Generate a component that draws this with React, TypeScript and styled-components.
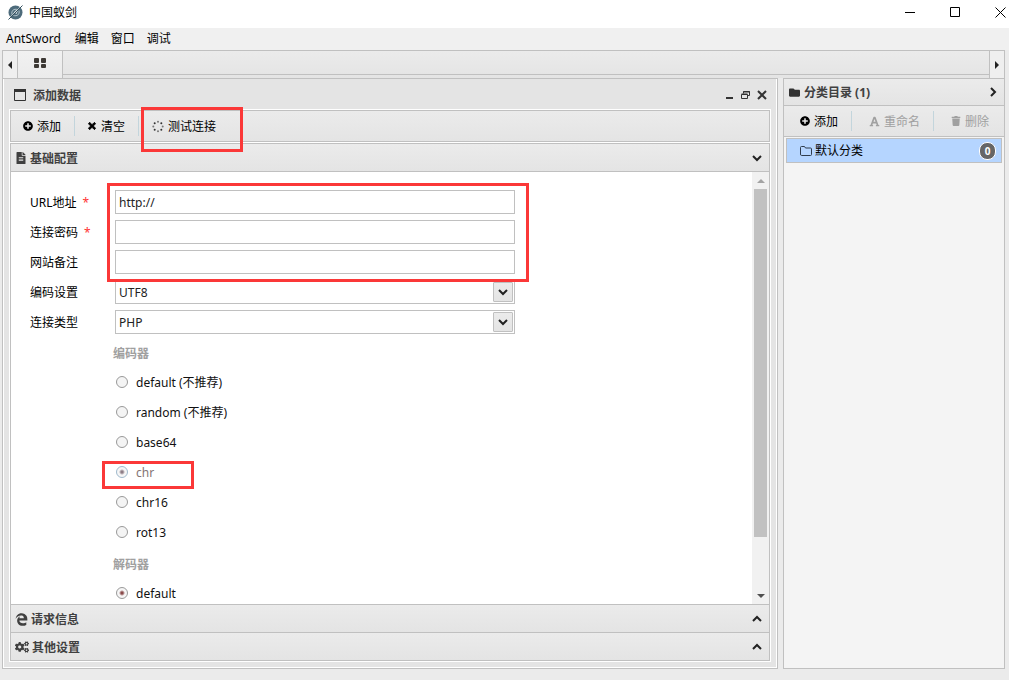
import React, { useState } from "react";
import styled, { createGlobalStyle, css } from "styled-components";
import {
  FaCogs,
  FaEdgeLegacy,
  FaFileAlt,
  FaFolder,
  FaFont,
  FaPlusCircle,
  FaTimes,
  FaTrash,
} from "react-icons/fa";

const line = "#c0c0c0";
const bar = "linear-gradient(#ebebeb, #e4e4e4)";

const GlobalStyle = createGlobalStyle`
  *, *::before, *::after { box-sizing: border-box; }
  body {
    margin: 0;
    background: #ebebeb;
    color: #000;
    font: 12px/17px "Noto Sans", "Noto Sans CJK SC", sans-serif;
  }
  button, input, select { font: inherit; color: inherit; }
  button { margin: 0; padding: 0; border: 0; background: none; }
  svg { display: block; flex: none; }
`;

const Window = styled.div`
  display: flex;
  flex-direction: column;
  height: 100vh;
`;

const TitleBar = styled.header`
  display: flex;
  align-items: center;
  flex: none;
  gap: 6px;
  height: 28px;
  padding: 0 3px 3px 8px;
  background: #fff;
`;

const AppTitle = styled.h1`
  flex: 1;
  margin: 0;
  font-size: 12px;
  font-weight: 400;
`;

const WindowControls = styled.div`
  display: flex;
  gap: 34px;
`;

const MenuBar = styled.nav`
  display: flex;
  align-items: center;
  flex: none;
  gap: 12px;
  height: 22px;
  padding: 0 6px 1px;
  background: #f0f0f0;
`;

const MenuItem = styled.button`
  flex: none;

  &:first-child { padding-right: 2px; }
`;

const Frame = styled.main`
  display: flex;
  flex-direction: column;
  flex: 1;
  min-height: 0;
  padding: 0 4px 11px 2px;
`;

const TabBar = styled.div`
  display: flex;
  flex: none;
  height: 28px;
  border: 1px solid ${line};
  border-bottom: 0;
  background: ${bar};
`;

const TabArrow = styled.button<{ $side: "left" | "right" }>`
  display: flex;
  align-items: center;
  justify-content: center;
  width: 15px;
  background: #efefef;
  ${(p) => (p.$side === "left" ? "border-right" : "border-left")}: 1px solid ${line};
`;

const ActiveTab = styled.button`
  display: flex;
  justify-content: center;
  width: 45px;
  padding-top: 7px;
  border-right: 1px solid ${line};
  background: linear-gradient(#f1f1f1, #ebebeb);
`;

const TabSpace = styled.div`
  flex: 1;
  height: 24px;
  border-bottom: 1px solid ${line};
`;

const Workspace = styled.div`
  display: flex;
  flex: 1;
  gap: 5px;
  min-height: 0;
`;

const Dialog = styled.section`
  display: flex;
  flex-direction: column;
  flex: 1;
  min-width: 0;
  padding: 0 6px 6px;
  border: 1px solid ${line};
  box-shadow: inset 1px 0 #fff, inset -1px -1px #fff;
  background: #e4e4e4;
`;

const DialogHeader = styled.header`
  display: flex;
  align-items: center;
  flex: none;
  gap: 7px;
  height: 30px;
  padding: 2px 4px 0 5px;
  color: #333;
`;

const Heading = styled.h2`
  flex: 1;
  margin: 0;
  font-size: 12px;
  font-weight: 700;
  color: #404040;
`;

const DialogControls = styled.div`
  display: flex;
  align-items: center;
  gap: 7px;
`;

const DialogBody = styled.div`
  display: flex;
  flex-direction: column;
  flex: 1;
  gap: 1px;
  min-height: 0;
  padding: 1px;
  background: #fff;
`;

const Toolbar = styled.div<{ $boxed?: boolean }>`
  display: flex;
  align-items: center;
  flex: none;
  background: ${bar};
  ${(p) =>
    p.$boxed
      ? css`
          height: 32px;
          border: 1px solid ${line};
        `
      : css`
          height: 31px;
          padding-left: 2px;
          border-bottom: 1px solid ${line};
        `}
`;

const ToolButton = styled.button<{ $wide?: boolean }>`
  position: relative;
  display: flex;
  align-items: center;
  gap: 4px;
  height: 20px;
  padding: 0 13px 0 ${(p) => (p.$wide ? 14 : 12)}px;
  white-space: nowrap;

  &:not(:first-child) {
    padding-left: ${(p) => (p.$wide ? 17 : 12)}px;
    border-left: 1px solid #c3d5dc;
  }

  &:disabled { color: #a0a0a0; }
`;

const Highlight = styled.span<{ $inset: string }>`
  position: absolute;
  inset: ${(p) => p.$inset};
  z-index: 2;
  border: 3px solid #fb3838;
  pointer-events: none;
`;

const Accordion = styled.div`
  display: flex;
  flex-direction: column;
  flex: 1;
  min-height: 0;
  border: 1px solid ${line};
`;

const AccordionHeader = styled.button<{ $open?: boolean }>`
  display: flex;
  align-items: center;
  flex: none;
  gap: 3px;
  height: 28px;
  padding: 1px 7px 0 4px;
  background: ${bar};
  color: #404040;
  font-weight: 700;
  text-align: left;
  border-${(p) => (p.$open ? "bottom" : "top")}: 1px solid ${line};
`;

const HeaderText = styled.span`
  flex: 1;
`;

const Pane = styled.div`
  display: flex;
  flex: 1;
  min-height: 0;
  background: #fff;
`;

const Form = styled.form`
  flex: 1;
  min-width: 0;
  overflow: hidden;
  padding: 15px 19px 0;
`;

const FieldGroup = styled.div`
  position: relative;
  width: 485px;
  max-width: 100%;
`;

const Row = styled.div`
  display: flex;
  align-items: center;
  height: 30px;
`;

const Label = styled.label`
  width: 85px;
  flex: none;
`;

const Required = styled.span`
  margin-left: 6px;
  color: #f33;
`;

const TextInput = styled.input`
  flex: 1;
  min-width: 0;
  height: 24px;
  padding: 0 3px;
  border: 1px solid ${line};
  border-radius: 0;
  background: #fff;
  color: #222;
  outline: 0;
`;

const SelectBox = styled.div`
  position: relative;
  display: flex;
  flex: 1;
  min-width: 0;
`;

const Select = styled.select`
  width: 100%;
  height: 24px;
  padding: 0 24px 0 3px;
  border: 1px solid ${line};
  border-radius: 0;
  background: #fff;
  color: #222;
  appearance: none;
`;

const SelectArrow = styled.span`
  position: absolute;
  top: 2px;
  right: 2px;
  display: flex;
  align-items: center;
  justify-content: center;
  width: 20px;
  height: 20px;
  border: 1px solid ${line};
  border-radius: 1px;
  background: ${bar};
  pointer-events: none;
`;

const Options = styled.fieldset`
  min-width: 0;
  margin: 0;
  padding: 0 0 1px 83px;
  border: 0;
`;

const Legend = styled.legend`
  float: left;
  width: 100%;
  height: 30px;
  padding: 0;
  color: #a0a0a0;
  font-weight: 700;
  line-height: 33px;

  & + * { clear: both; }
`;

const Option = styled.label<{ $marked?: boolean }>`
  position: relative;
  display: flex;
  align-items: center;
  gap: 8px;
  width: max-content;
  height: 30px;
  padding-left: 3px;
  color: ${(p) => (p.$marked ? "#847474" : "#111")};
`;

const Radio = styled.input<{ $marked?: boolean }>`
  width: 12px;
  height: 12px;
  margin: 0;
  border: 1px solid ${(p) => (p.$marked ? "#9fb9cc" : "#999")};
  border-radius: 50%;
  background: #f4f4f4;
  appearance: none;

  &:checked {
    background: radial-gradient(circle, ${(p) => (p.$marked ? "#8e7d86" : "#8a4a4a")} 1px, #f6f6f6 3px);
  }
`;

const ScrollTrack = styled.div`
  display: flex;
  flex-direction: column;
  align-items: center;
  flex: none;
  width: 17px;
  background: #f1f1f1;
`;

const ScrollArrow = styled.span`
  display: flex;
  align-items: center;
  justify-content: center;
  flex: none;
  height: 17px;
`;

const ScrollRange = styled.div`
  flex: 1;
  width: 13px;
`;

const ScrollThumb = styled.div`
  height: 87.5%;
  background: #c1c1c1;
`;

const Sidebar = styled.aside`
  display: flex;
  flex-direction: column;
  flex: none;
  width: 222px;
  border: 1px solid ${line};
  background: #f4f4f4;
`;

const SidebarHeader = styled.header`
  display: flex;
  align-items: center;
  flex: none;
  gap: 4px;
  height: 27px;
  padding: 0 6px 0 5px;
  border-bottom: 1px solid ${line};
  background: ${bar};
  color: #333;
`;

const Category = styled.button`
  display: flex;
  align-items: center;
  gap: 3px;
  height: 25px;
  margin: 1px 2px;
  padding: 0 5px 0 13px;
  border: 1px solid ${line};
  background: #b5d5ff;
  text-align: left;
`;

const CategoryName = styled.span`
  flex: 1;
`;

const Badge = styled.span`
  min-width: 17px;
  height: 18px;
  border: 1px solid #fff;
  border-radius: 8px;
  background: #666;
  color: #fff;
  font-size: 10px;
  font-weight: 700;
  line-height: 16px;
  text-align: center;
`;

const Logo = () => (
  <svg width="15" height="15" viewBox="0 0 30 30" aria-hidden="true">
    <circle cx="15" cy="15" r="14" fill="#4d6b7b" />
    <path d="M8 19c-2-8 4-12 11-10M22 11c2 8-4 12-11 10" fill="none" stroke="#b4c5cd" strokeWidth="2" />
    <path d="M12 18c1-5 3-7 7-7l-3 7" fill="none" stroke="#d3dde1" strokeWidth="2" />
    <path d="M1 27L27 1" stroke="#fff" strokeWidth="1" />
    <path d="M1 29L29 1" stroke="#34505f" strokeWidth="2" />
  </svg>
);

const Chevron = ({ dir }: { dir: "up" | "down" | "right" }) => {
  const paths = {
    up: "M1 7L5 3L9 7",
    down: "M1 3L5 7L9 3",
    right: "M3 1L7 5L3 9",
  };
  return (
    <svg width="10" height="10" viewBox="0 0 10 10" aria-hidden="true">
      <path d={paths[dir]} fill="none" stroke="#222" strokeWidth="2" />
    </svg>
  );
};

const Triangle = ({ points, fill }: { points: string; fill: string }) => (
  <svg width="8" height="8" viewBox="0 0 8 8" aria-hidden="true">
    <polygon points={points} fill={fill} />
  </svg>
);

const WindowIcon = () => (
  <svg width="12" height="12" viewBox="0 0 12 12" aria-hidden="true">
    <path d="M.5 .5h11v11H.5z" fill="none" stroke="#333" />
    <path d="M0 0h12v3H0z" fill="#333" />
  </svg>
);

const FolderIcon = () => (
  <svg width="12" height="10" viewBox="0 0 12 10" aria-hidden="true">
    <path
      d="M.5 8V1.5Q.5.5 1.5.5H4.500L5.500 2H10.500Q11.500 2 11.500 3V8.500Q11.500 9.500 10.500 9.500H1.500Q.5 9.500.5 8Z"
      fill="none"
      stroke="#2f3c4c"
    />
  </svg>
);

const SpinnerIcon = () => (
  <svg width="13" height="13" viewBox="0 0 13 13" aria-hidden="true">
    {[0, 1, 2, 3, 4, 5, 6, 7].map((i) => (
      <circle
        key={i}
        cx={7 + 4.7 * Math.sin((i * Math.PI) / 4)}
        cy={6.5 - 4.7 * Math.cos((i * Math.PI) / 4)}
        r={1}
        fill={i % 2 ? "#333" : "#777"}
      />
    ))}
  </svg>
);

const encoders = [
  { value: "default", text: "default (不推荐)" },
  { value: "random", text: "random (不推荐)" },
  { value: "base64", text: "base64" },
  { value: "chr", text: "chr" },
  { value: "chr16", text: "chr16" },
  { value: "rot13", text: "rot13" },
];

export default function App() {
  const [url, setUrl] = useState("http://");
  const [encoder, setEncoder] = useState("chr");

  return (
    <Window>
      <GlobalStyle />
      <TitleBar>
        <Logo />
        <AppTitle>中国蚁剑</AppTitle>
        <WindowControls>
          <button aria-label="最小化">
            <svg width="11" height="11"><path d="M0 5.5h10" stroke="#000" /></svg>
          </button>
          <button aria-label="最大化">
            <svg width="11" height="11"><path d="M.5.5h9v9h-9z" fill="none" stroke="#000" /></svg>
          </button>
          <button aria-label="关闭">
            <svg width="11" height="11"><path d="M.5.5l10 10M10.5.5l-10 10" stroke="#000" /></svg>
          </button>
        </WindowControls>
      </TitleBar>
      <MenuBar>
        <MenuItem>AntSword</MenuItem>
        <MenuItem>编辑</MenuItem>
        <MenuItem>窗口</MenuItem>
        <MenuItem>调试</MenuItem>
      </MenuBar>
      <Frame>
        <TabBar>
          <TabArrow $side="left" aria-label="向左">
            <Triangle points="6,0 6,8 2,4" fill="#222" />
          </TabArrow>
          <ActiveTab aria-label="主页">
            <svg width="12" height="11" viewBox="0 0 12 11">
              <g fill="#3d3935">
                <rect width="5" height="5" rx="1" />
                <rect width="5" height="5" x="7" rx="1" />
                <rect width="5" height="4" y="6" rx="1" />
                <rect width="5" height="4" x="7" y="6" rx="1" />
              </g>
            </svg>
          </ActiveTab>
          <TabSpace />
          <TabArrow $side="right" aria-label="向右">
            <Triangle points="2,0 2,8 6,4" fill="#222" />
          </TabArrow>
        </TabBar>
        <Workspace>
          <Dialog>
            <DialogHeader>
              <WindowIcon />
              <Heading>添加数据</Heading>
              <DialogControls>
                <button aria-label="最小化窗口">
                  <svg width="8" height="10"><path d="M0 8h7" stroke="#333" strokeWidth="2" /></svg>
                </button>
                <button aria-label="还原窗口">
                  <svg width="9" height="8" viewBox="0 0 9 8">
                    <path d="M2.5 2.5v-2h6v4h-2M.5 3.5h6v4h-6zM.5 3h6M2 1h7" fill="none" stroke="#333" />
                  </svg>
                </button>
                <button aria-label="关闭窗口">
                  <svg width="10" height="10"><path d="M1 1l8 8M9 1l-8 8" stroke="#333" strokeWidth="2" /></svg>
                </button>
              </DialogControls>
            </DialogHeader>
            <DialogBody>
              <Toolbar $boxed>
                <ToolButton><FaPlusCircle size={10} />添加</ToolButton>
                <ToolButton><FaTimes size={10} strokeWidth={50} stroke="#000" />清空</ToolButton>
                <ToolButton>
                  <SpinnerIcon />测试连接
                  <Highlight $inset="-9px -14px -16px 2px" />
                </ToolButton>
              </Toolbar>
              <Accordion>
                <AccordionHeader $open aria-expanded="true">
                  <FaFileAlt size={12} />
                  <HeaderText>基础配置</HeaderText>
                  <Chevron dir="down" />
                </AccordionHeader>
                <Pane>
                  <Form>
                    <FieldGroup>
                      <Row>
                        <Label htmlFor="url">URL地址<Required>*</Required></Label>
                        <TextInput id="url" value={url} onChange={(e) => setUrl(e.target.value)} />
                      </Row>
                      <Row>
                        <Label htmlFor="pwd">连接密码<Required>*</Required></Label>
                        <TextInput id="pwd" />
                      </Row>
                      <Row>
                        <Label htmlFor="note">网站备注</Label>
                        <TextInput id="note" />
                      </Row>
                      <Highlight $inset="-4px -14px -5px 77px" />
                    </FieldGroup>
                    <FieldGroup>
                      <Row>
                        <Label htmlFor="encode">编码设置</Label>
                        <SelectBox>
                          <Select id="encode"><option>UTF8</option></Select>
                          <SelectArrow><Chevron dir="down" /></SelectArrow>
                        </SelectBox>
                      </Row>
                      <Row>
                        <Label htmlFor="type">连接类型</Label>
                        <SelectBox>
                          <Select id="type"><option>PHP</option></Select>
                          <SelectArrow><Chevron dir="down" /></SelectArrow>
                        </SelectBox>
                      </Row>
                    </FieldGroup>
                    <Options>
                      <Legend>编码器</Legend>
                      {encoders.map((e) => (
                        <Option key={e.value} $marked={encoder === e.value}>
                          <Radio
                            type="radio"
                            name="encoder"
                            $marked={encoder === e.value}
                            checked={encoder === e.value}
                            onChange={() => setEncoder(e.value)}
                          />
                          {e.text}
                          {e.value === "chr" && <Highlight $inset="4px -40px -2px -11px" />}
                        </Option>
                      ))}
                    </Options>
                    <Options>
                      <Legend>解码器</Legend>
                      <Option>
                        <Radio type="radio" name="decoder" defaultChecked />
                        default
                      </Option>
                    </Options>
                  </Form>
                  <ScrollTrack>
                    <ScrollArrow><Triangle points="0,6 8,6 4,2" fill="#a3a3a3" /></ScrollArrow>
                    <ScrollRange><ScrollThumb /></ScrollRange>
                    <ScrollArrow><Triangle points="0,2 8,2 4,6" fill="#505050" /></ScrollArrow>
                  </ScrollTrack>
                </Pane>
                <AccordionHeader aria-expanded="false">
                  <FaEdgeLegacy size={13} />
                  <HeaderText>请求信息</HeaderText>
                  <Chevron dir="up" />
                </AccordionHeader>
                <AccordionHeader aria-expanded="false">
                  <FaCogs size={14} />
                  <HeaderText>其他设置</HeaderText>
                  <Chevron dir="up" />
                </AccordionHeader>
              </Accordion>
            </DialogBody>
          </Dialog>
          <Sidebar>
            <SidebarHeader>
              <FaFolder size={11} />
              <Heading>分类目录 (1)</Heading>
              <Chevron dir="right" />
            </SidebarHeader>
            <Toolbar>
              <ToolButton $wide><FaPlusCircle size={10} />添加</ToolButton>
              <ToolButton $wide disabled><FaFont size={11} />重命名</ToolButton>
              <ToolButton $wide disabled><FaTrash size={10} />删除</ToolButton>
            </Toolbar>
            <Category>
              <FolderIcon />
              <CategoryName>默认分类</CategoryName>
              <Badge>0</Badge>
            </Category>
          </Sidebar>
        </Workspace>
      </Frame>
    </Window>
  );
}
